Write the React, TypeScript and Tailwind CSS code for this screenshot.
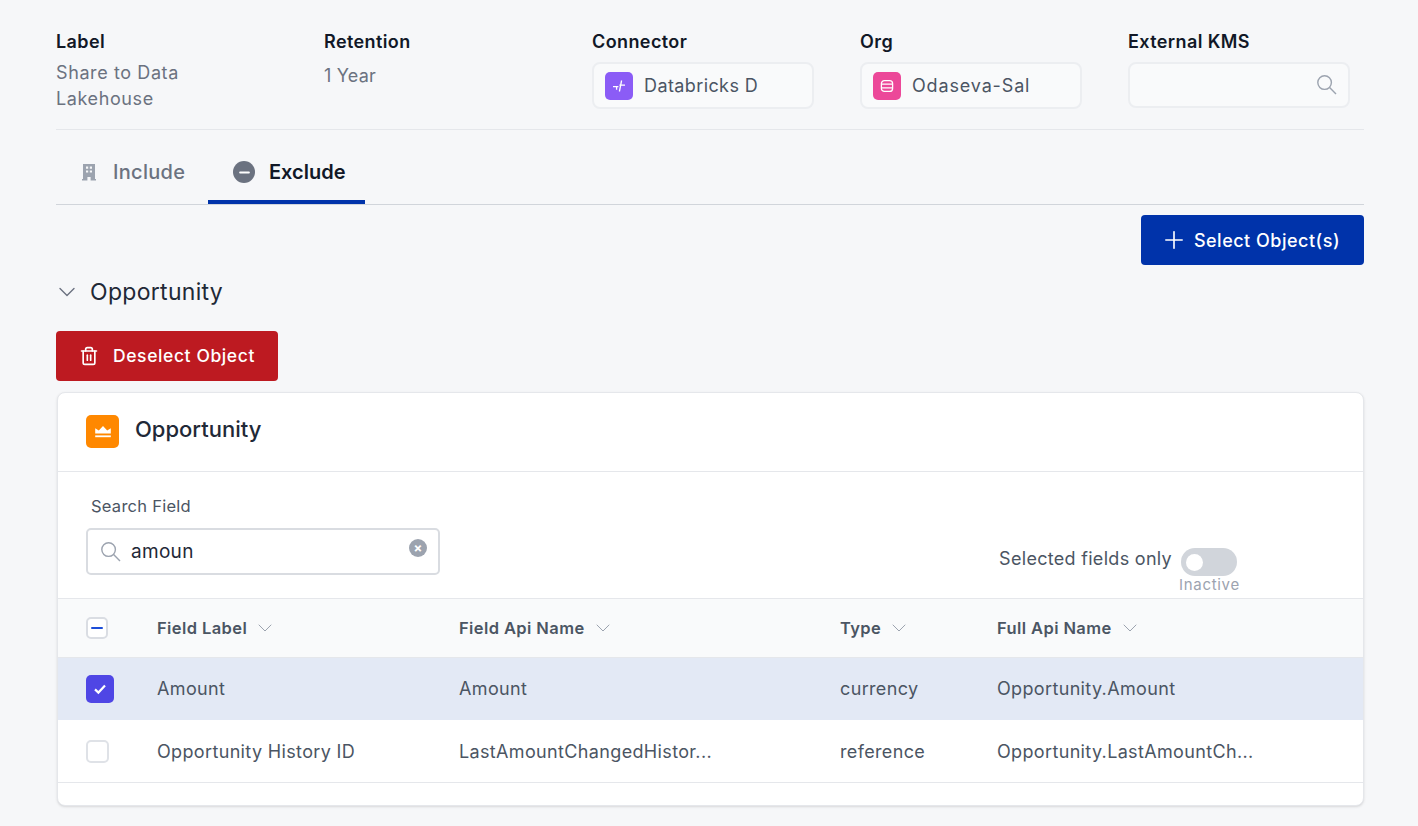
import { ChevronDown, Minus, Plus, Trash2 } from "lucide-react";

const FONT = "font-['Inter','Noto_Sans',sans-serif]";

const columns = [
  { label: "Field Label" },
  { label: "Field Api Name" },
  { label: "Type" },
  { label: "Full Api Name" },
];

const rows = [
  {
    label: "Amount",
    api: "Amount",
    type: "currency",
    full: "Opportunity.Amount",
    selected: true,
  },
  {
    label: "Opportunity History ID",
    api: "LastAmountChangedHistor...",
    type: "reference",
    full: "Opportunity.LastAmountCh...",
    selected: false,
  },
];

const ROW_GRID = "grid grid-cols-[99px_302px_381px_157px_1fr] items-center";

function SearchIcon() {
  return (
    <svg width="20" height="20" viewBox="0 0 20 20" fill="none" stroke="#9ca3af" strokeWidth="1.4">
      <circle cx="7.6" cy="7.6" r="6.8" />
      <path d="M12.6 12.6 19 19" />
    </svg>
  );
}

function BuildingIcon() {
  return (
    <svg width="16" height="18" viewBox="0 0 16 18" fill="#9ca3af" fillRule="evenodd">
      <path d="M2 1h12v15h1v1.4H9.6V14H6.4v3.4H1V16h1V1Zm3 2.6v2.2h2.2V3.6H5Zm3.8 0v2.2H11V3.6H8.8ZM5 7.4v2.2h2.2V7.4H5Zm3.8 0v2.2H11V7.4H8.8Z" />
    </svg>
  );
}

function ConnectorIcon() {
  return (
    <svg width="16" height="16" viewBox="0 0 16 16" fill="none" stroke="#fff" strokeWidth="1.3">
      <path d="M2 8.6h5.4M8.4 7.2H14M10.6 2.5 8.4 13.5M5.6 8.6v3.2" />
    </svg>
  );
}

function BarrelIcon() {
  return (
    <svg width="16" height="16" viewBox="0 0 16 16" fill="none" stroke="#fff" strokeWidth="1.3">
      <rect x="2.4" y="2.6" width="11.2" height="10.8" rx="3" />
      <path d="M2.4 6.2h11.2M2.4 9.8h11.2" />
    </svg>
  );
}

function CrownIcon() {
  return (
    <svg width="16" height="14" viewBox="0 0 16 14" fill="#fff">
      <path d="M.2 8.6V3.2l3.6 2.4L8 1l4.2 4.6 3.6-2.4v5.4H.2Z" />
      <rect x=".2" y="10.4" width="15.6" height="1.8" />
    </svg>
  );
}

function Field({ label, children }: { label: string; children: React.ReactNode }) {
  return (
    <div className="flex flex-col">
      <span className="text-[18px] leading-[24px] font-semibold tracking-[0.4px] text-[#111827]">{label}</span>
      {children}
    </div>
  );
}

function ChipBox({
  color,
  icon,
  text,
  textClass,
}: {
  color: string;
  icon: React.ReactNode;
  text: string;
  textClass: string;
}) {
  return (
    <div className="mt-[8px] flex h-[47px] items-center gap-[11px] rounded-lg border-2 border-[#eceef1] bg-[#f9fafb] pl-[11px]">
      <span className={`flex size-[28px] items-center justify-center rounded-[5px] ${color}`}>{icon}</span>
      <span className={`text-[18px] text-[#4b5563] ${textClass}`}>{text}</span>
    </div>
  );
}

export default function App() {
  return (
    <div className={`${FONT} h-[826px] w-[1418px] overflow-hidden bg-[#f6f7f9] pt-[30px] pr-[54px] pl-[56px]`}>
      <div className="grid h-[100px] w-[1308px] grid-cols-[222px_222px_222px_222px_222px] gap-x-[46px] border-b border-[#e5e7eb]">
        <Field label="Label">
          <p className="mt-[6px] w-[170px] text-[18px] leading-[26px] tracking-[0.6px] text-[#6b7280]">
            Share to Data Lakehouse
          </p>
        </Field>
        <Field label="Retention">
          <p className="mt-[9px] text-[18px] leading-[26px] tracking-[0.2px] text-[#6b7280]">1 Year</p>
        </Field>
        <Field label="Connector">
          <ChipBox color="bg-[#8b5cf6]" icon={<ConnectorIcon />} text="Databricks D" textClass="tracking-[0.4px]" />
        </Field>
        <Field label="Org">
          <ChipBox color="bg-[#ec4899]" icon={<BarrelIcon />} text="Odaseva-Sal" textClass="tracking-[0.85px]" />
        </Field>
        <Field label="External KMS">
          <div className="mt-[8px] flex h-[46px] items-center justify-end rounded-lg border-2 border-[#eceef1] bg-[#f9fafb] pr-[11px]">
            <SearchIcon />
          </div>
        </Field>
      </div>

      <div className="mt-[14px] flex h-[61px] border-b border-[#d1d5db]">
        <div className="flex h-[60px] w-[152px] items-center gap-[16px] border-b-[4px] border-transparent pl-[25px] text-[20px] font-medium tracking-[0.3px] text-[#6b7280]">
          <BuildingIcon />
          <span>Include</span>
        </div>
        <div className="flex h-[60px] w-[157px] items-center gap-[14px] border-b-[4px] border-[#0033aa] pl-[25px] text-[20px] font-semibold text-[#111827]">
          <span className="flex size-[22px] items-center justify-center rounded-full bg-[#6b7280]">
            <Minus size={15} strokeWidth={3.2} className="text-white" />
          </span>
          <span>Exclude</span>
        </div>
      </div>

      <div className="mt-[10px] flex justify-end">
        <button className="flex h-[50px] w-[223px] items-center justify-center gap-[6px] rounded-[4px] bg-[#0033aa] pr-[5px] text-[18px] font-medium tracking-[0.5px] text-white">
          <Plus size={28} strokeWidth={1.4} />
          Select Object(s)
        </button>
      </div>

      <div className="mt-[11px] -ml-[3px] flex h-[32px] items-center gap-[9px] text-[23px] tracking-[0.3px] text-[#1f2937]">
        <ChevronDown size={28} strokeWidth={1.2} className="text-[#6b7280]" />
        <span>Opportunity</span>
      </div>

      <button className="mt-[23px] flex h-[50px] w-[222px] items-center gap-[14px] rounded-[4px] bg-[#bd1a21] pl-[23px] text-[17.5px] font-medium tracking-[0.6px] text-white">
        <Trash2 size={20} strokeWidth={2} />
        Deselect Object
      </button>

      <div className="mt-[11px] ml-px h-[414px] overflow-hidden rounded-lg border border-[#e5e7eb] bg-white shadow-sm">
        <div className="flex h-[79px] items-center gap-[16px] border-b border-[#e5e7eb] pl-[28px]">
          <span className="-mt-[1px] flex size-[33px] items-center justify-center rounded-[5px] bg-[#ff8800]">
            <CrownIcon />
          </span>
          <span className="pb-[5px] text-[22px] font-medium text-[#1f2937]">Opportunity</span>
        </div>

        <div className="flex h-[126px] items-end justify-between pr-[124px] pl-[28px]">
          <div className="flex flex-col pb-[23px]">
            <label className="ml-[5px] text-[16.5px] leading-[24px] tracking-[0.25px] text-[#4b5563]">
              Search Field
            </label>
            <div className="mt-[10px] flex h-[47px] w-[354px] items-center rounded-[5px] border-2 border-[#d9dce1] pr-[11px] pl-[13px]">
              <SearchIcon />
              <span className="ml-[10px] flex-1 pt-[1px] text-[19px] tracking-[0.3px] text-[#1f2937]">amoun</span>
              <span className="mb-[7px] flex size-[18px] items-center justify-center rounded-full bg-[#9ca3af] text-[13px] leading-none font-bold text-white">
                ×
              </span>
            </div>
          </div>
          <div className="flex items-start gap-[7px] pb-[3px]">
            <span className="mt-[1px] text-[18px] leading-[20px] tracking-[0.3px] text-[#4b5563]">
              Selected fields only
            </span>
            <div className="flex flex-col items-center">
              <span className="flex h-[28px] w-[56px] items-center rounded-full bg-[#d1d5db] pl-[5px]">
                <span className="size-[17px] rounded-full bg-white" />
              </span>
              <span className="-mt-[1px] w-[60px] text-center text-[15px] leading-[20px] tracking-[0.7px] whitespace-nowrap text-[#9ca3af]">
                Inactive
              </span>
            </div>
          </div>
        </div>

        <div className={`${ROW_GRID} h-[60px] border-y border-[#e5e7eb] bg-[#f9fafb] text-[#4b5563]`}>
          <span className="ml-[28px] flex size-[22px] items-center justify-center rounded-[5px] border-2 border-[#dadde3] bg-white">
            <span className="h-[2.5px] w-[12px] rounded bg-[#1d4ed8]" />
          </span>
          {columns.map((col) => (
            <span key={col.label} className="flex items-center gap-[6px] text-[16.5px] font-semibold tracking-[0.4px]">
              {col.label}
              <ChevronDown size={24} strokeWidth={1} className="text-[#9ca3af]" />
            </span>
          ))}
        </div>

        {rows.map((row) => (
          <div
            key={row.label}
            className={`${ROW_GRID} border-b text-[18px] tracking-[0.35px] text-[#4b5563] ${
              row.selected ? "h-[62px] border-[#e3e9f5] bg-[#e3e9f5]" : "h-[63px] border-[#e5e7eb] bg-white"
            }`}
          >
            {row.selected ? (
              <span className="ml-[28px] flex size-[28px] items-center justify-center rounded-[5px] bg-[#4f46e5]">
                <svg width="14" height="12" viewBox="0 0 14 12" fill="none" stroke="#fff" strokeWidth="2.2">
                  <path d="M2 6.4 5.4 9.6 12 2.6" />
                </svg>
              </span>
            ) : (
              <span className="ml-[28px] size-[23px] rounded-[5px] border-2 border-[#dfe2e7] bg-white" />
            )}
            <span>{row.label}</span>
            <span>{row.api}</span>
            <span>{row.type}</span>
            <span>{row.full}</span>
          </div>
        ))}
      </div>
    </div>
  );
}
